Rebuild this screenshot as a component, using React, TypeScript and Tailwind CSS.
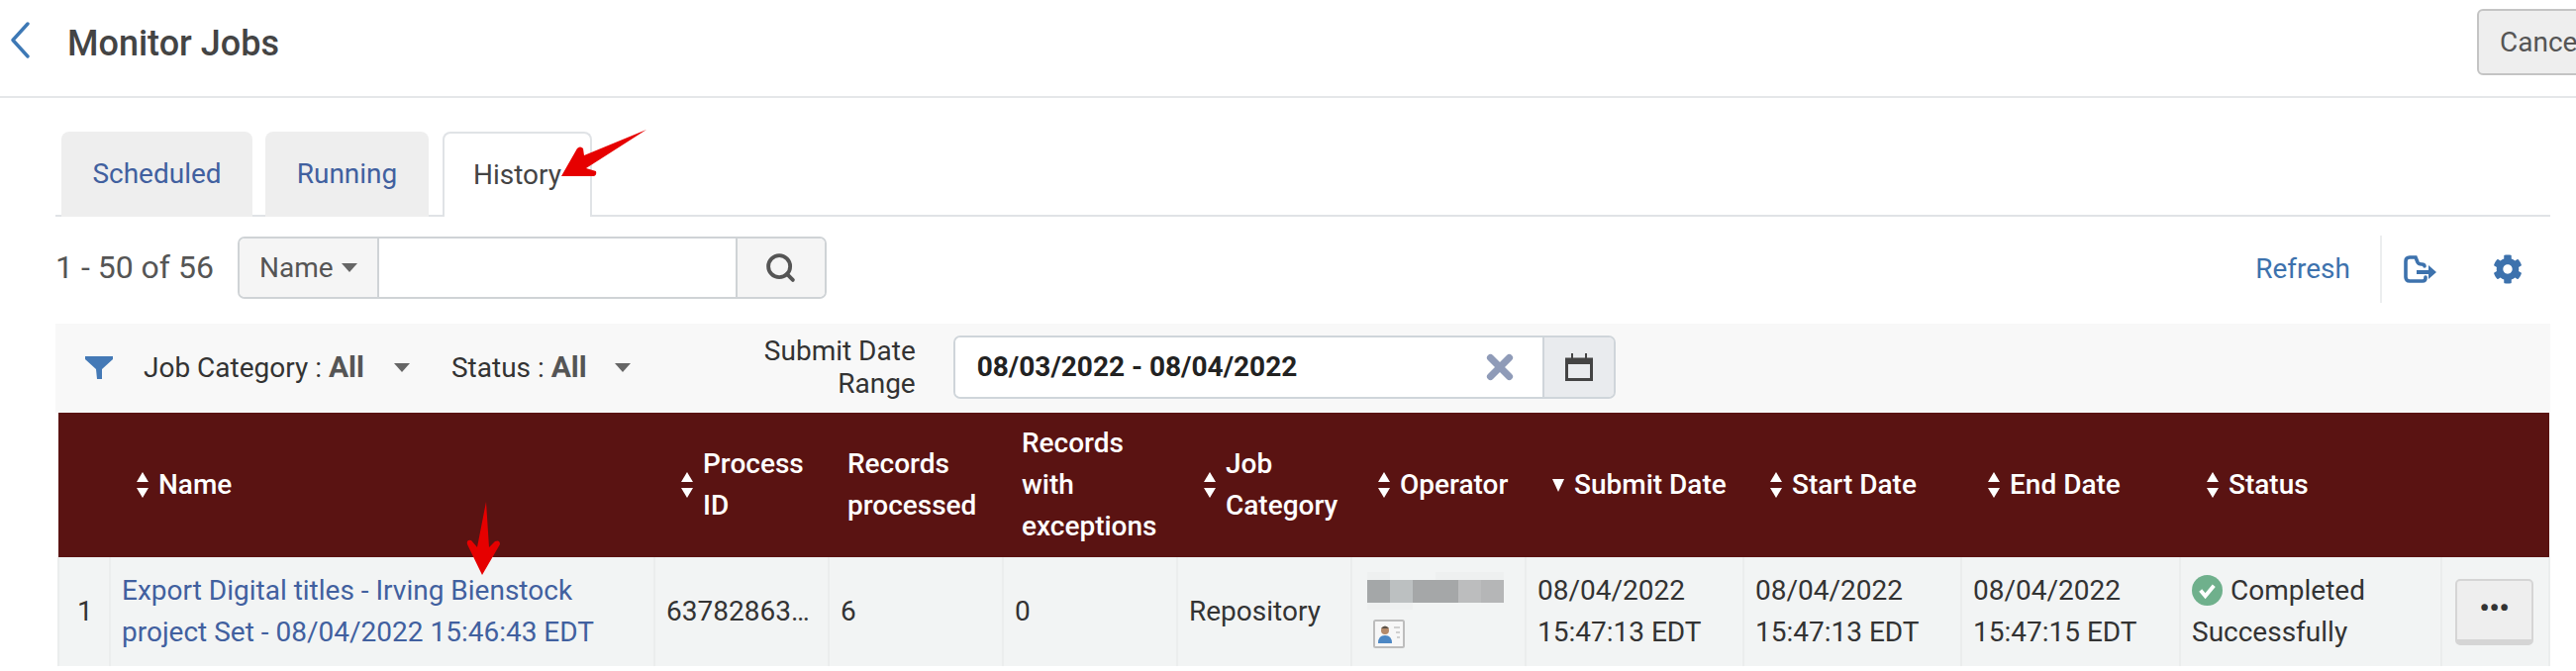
import React from 'react';
import { Search, X } from 'lucide-react';
import { FaCog } from 'react-icons/fa';

const font = "font-['Roboto',sans-serif]";

function SortIcon({ down }: { down?: boolean }) {
  if (down) {
    return (
      <svg width="14" height="14" viewBox="0 0 14 14" className="shrink-0 fill-white">
        <path d="M1 1 L13 1 L7 14 Z" />
      </svg>
    );
  }
  return (
    <svg width="14" height="28" viewBox="0 0 14 28" className="shrink-0 fill-white">
      <path d="M7 1 L13 11 L1 11 Z" />
      <path d="M1 17 L13 17 L7 27 Z" />
    </svg>
  );
}

function HeaderCell({ children, sort = true, down, pl = "pl-[26px]" }: { children: React.ReactNode; sort?: boolean; down?: boolean; pl?: string }) {
  return (
    <th className={`${pl} pr-1 font-medium text-left align-middle`}>
      <div className="flex items-center gap-[9px] leading-[42px]">
        {(sort || down) && <SortIcon down={down} />}
        <span>{children}</span>
      </div>
    </th>
  );
}

function Caret() {
  return <span className="inline-block w-0 h-0 border-x-[8px] border-x-transparent border-t-[9px] border-t-[#666]" />;
}

export default function App() {
  return (
    <div className={`${font} relative w-[2602px] h-[678px] overflow-hidden bg-white text-[28px] text-[#333]`}>
      {/* top bar */}
      <div className="h-[99px] border-b-2 border-[#e5e7e9] flex items-center">
        <svg width="20" height="37" viewBox="0 0 20 37" className="ml-[10px] -mt-[16px] fill-none stroke-[#3d78b5]">
          <path d="M18 2 L3 18.5 L18 35" strokeWidth="3.4" strokeLinecap="round" strokeLinejoin="round" />
        </svg>
        <h1 className="ml-[38px] text-[36px] font-medium text-[#444] -mt-[10px]">Monitor Jobs</h1>
        <button className="ml-auto -mr-[60px] -mt-[12px] w-[160px] h-[67px] text-left pl-[21px] bg-[#eeeeee] border-2 border-[#c4c4c4] rounded-[6px] text-[#555]">Cancel</button>
      </div>

      <div className="pl-[56px] w-[2576px]">
        {/* tabs */}
        <div className="mt-[33px] h-[87px] border-b-2 border-[#e0e3e6] flex items-end">
          <div className="ml-[6px] w-[193px] h-[86px] -mb-[2px] bg-[#eeeeee] rounded-t-[8px] flex items-center justify-center text-[#41609f]">Scheduled</div>
          <div className="ml-[13px] w-[165px] h-[86px] -mb-[2px] bg-[#eeeeee] rounded-t-[8px] flex items-center justify-center text-[#41609f]">Running</div>
          <div className="ml-[14px] w-[151px] h-[86px] -mb-[2px] bg-white border-2 border-b-0 border-[#e0e3e6] rounded-t-[8px] flex items-center justify-center text-[#444]">History</div>
        </div>

        {/* toolbar */}
        <div className="h-[108px] flex items-start">
          <span className="mt-[30px] text-[#555] text-[32px] leading-[42px]">1 - 50 of 56</span>
          <div className="ml-[24px] mt-[20px] w-[595px] h-[63px] flex border-2 border-[#cfd3d6] rounded-[7px] overflow-hidden">
            <div className="w-[141px] bg-[#f5f5f5] border-r-2 border-[#cfd3d6] flex items-center justify-center gap-[8px] text-[#555]">Name <Caret /></div>
            <div className="flex-1 bg-white" />
            <div className="w-[90px] bg-[#f5f5f5] border-l-2 border-[#cfd3d6] flex items-center justify-center">
              <Search size={33} strokeWidth={2.8} className="text-[#555]" />
            </div>
          </div>
          <div className="ml-auto mt-[19px] flex items-center h-[68px]">
            <span className="text-[#3d72ad] mr-[30px]">Refresh</span>
            <div className="w-[2px] h-[68px] bg-[#eceeef]" />
            <svg width="33" height="28" viewBox="0 0 33 28" className="ml-[22px] fill-none stroke-[#3d72ad]">
              <path d="M22 22 V23 Q22 26 19 26 H6 Q2 26 2 22 V6 Q2 2 6 2 H12 L14 7 Q15 9 18 9 Q21 9 21 11" strokeWidth="3.6" strokeLinecap="round" />
              <path d="M13 15 H25 V10 L33 17 L25 24 V19 H13 Z" className="fill-[#3d72ad]" strokeWidth="0" />
            </svg>
            <FaCog size={30} className="ml-[57px] mr-[28px] text-[#3d72ad]" />
          </div>
        </div>

        {/* filter bar */}
        <div className="h-[90px] bg-[#f8f8f8] flex items-center">
          <svg width="28" height="24" viewBox="0 0 28 24" className="ml-[30px] fill-[#4479b6] -mt-[2px]">
            <path d="M0 1 H28 V4 L17 14 V24 H12 L11 14 L0 4 Z" />
          </svg>
          <span className="ml-[31px] -mt-[3px]">Job Category : <b className="font-bold text-[30px] text-[#555]">All</b></span>
          <span className="ml-[30px] flex -mt-[2px]"><Caret /></span>
          <span className="ml-[42px] -mt-[3px]">Status : <b className="font-bold text-[30px] text-[#555]">All</b></span>
          <span className="ml-[28px] flex -mt-[2px]"><Caret /></span>
          <span className="ml-[130px] w-[158px] text-right leading-[33px] -mt-[3px]">Submit Date Range</span>
          <div className="ml-[38px] w-[669px] h-[64px] -mt-[3px] flex border-2 border-[#cfd5da] rounded-[7px] overflow-hidden">
            <div className="flex-1 bg-white flex items-center pl-[22px] font-bold text-[#222]">
              08/03/2022 - 08/04/2022
              <X size={38} strokeWidth={4.5} className="ml-auto mr-[24px] text-[#8f9bb8]" />
            </div>
            <div className="w-[72px] bg-[#e9ebee] border-l-2 border-[#cfd5da] flex items-center justify-center">
              <svg width="28" height="28" viewBox="0 0 28 28" className="fill-none stroke-[#444]">
                <path d="M1.5 6 H26.5 V26.5 H1.5 Z M1.5 8 H26.5" strokeWidth="3" />
                <path d="M1.5 5 H26.5 V11 H1.5 Z" className="fill-[#444]" strokeWidth="0" />
                <path d="M7 0 V5 M21 0 V5" strokeWidth="2" />
              </svg>
            </div>
          </div>
        </div>

        {/* table */}
        <table className="ml-[2px] w-[2516px] table-fixed border-collapse">
          <colgroup>
            <col className="w-[52px]" />
            <col className="w-[550px]" />
            <col className="w-[176px]" />
            <col className="w-[176px]" />
            <col className="w-[176px]" />
            <col className="w-[176px]" />
            <col className="w-[176px]" />
            <col className="w-[220px]" />
            <col className="w-[220px]" />
            <col className="w-[221px]" />
            <col className="w-[264px]" />
            <col className="w-[109px]" />
          </colgroup>
          <thead>
            <tr className="h-[146px] bg-[#5a1312] text-white">
              <th />
              <HeaderCell>Name</HeaderCell>
              <HeaderCell>Process ID</HeaderCell>
              <HeaderCell sort={false} pl="pl-[19px]">Records processed</HeaderCell>
              <HeaderCell sort={false} pl="pl-[19px]">Records with exceptions</HeaderCell>
              <HeaderCell>Job Category</HeaderCell>
              <HeaderCell>Operator</HeaderCell>
              <HeaderCell down sort={false}>Submit Date</HeaderCell>
              <HeaderCell>Start Date</HeaderCell>
              <HeaderCell>End Date</HeaderCell>
              <HeaderCell>Status</HeaderCell>
              <th />
            </tr>
          </thead>
          <tbody>
            <tr className="h-[110px] bg-[#f2f4f4] leading-[42px] [&>td]:border-x-2 [&>td]:border-[#ebeded] [&>td]:px-[11px]">
              <td className="pl-[18px]!">1</td>
              <td className="text-[#41609f]">Export Digital titles - Irving Bienstock project Set - 08/04/2022 15:46:43 EDT</td>
              <td className="whitespace-nowrap">63782863…</td>
              <td>6</td>
              <td>0</td>
              <td>Repository</td>
              <td className="align-top pt-[15px]">
                <div className="flex w-[138px] h-[8px] ml-[4px]">
                  <div className="w-[23px] bg-[#eef0f0]" />
                  <div className="w-[46px]" />
                  <div className="w-[69px] bg-[#eef0f0]" />
                </div>
                <div className="flex w-[138px] h-[23px] ml-[4px]">
                  <div className="w-[23px] bg-[#a4a7a8]" />
                  <div className="w-[23px] bg-[#bcc0c1]" />
                  <div className="w-[46px] bg-[#a5a7a8]" />
                  <div className="w-[23px] bg-[#bcbdbe]" />
                  <div className="w-[23px] bg-[#b5b6b7]" />
                </div>
                <div className="h-[7px] w-[46px] ml-[4px] bg-[#eef0f0]" />
                <svg width="32" height="29" viewBox="0 0 32 29" className="mt-[10px] ml-[10px]">
                  <rect x="1" y="1" width="30" height="27" rx="1.5" fill="#f7f7f7" stroke="#bdbdbd" strokeWidth="2" />
                  <path d="M21 8 H27 M23 13 H27 M24 18 H27" stroke="#c4c4c4" strokeWidth="1.6" />
                  <circle cx="12" cy="11" r="4" fill="#b48a6a" />
                  <path d="M8 9 Q12 4 16 9 Z" fill="#5b5148" />
                  <path d="M5 24 Q5 16 12 16 Q19 16 19 24 Z" fill="#4c87c4" />
                </svg>
              </td>
              <td>08/04/2022 15:47:13 EDT</td>
              <td>08/04/2022 15:47:13 EDT</td>
              <td>08/04/2022 15:47:15 EDT</td>
              <td>
                <svg width="31" height="31" viewBox="0 0 32 32" className="inline-block align-[-6px] mr-[8px]">
                  <circle cx="16" cy="16" r="16" fill="#6fb08c" />
                  <path d="M9 16 L14 22 L23 11" fill="none" stroke="#fff" strokeWidth="4" />
                </svg>
                Completed Successfully
              </td>
              <td>
                <div className="ml-[2px] w-[79px] h-[67px] bg-[#eeeeee] border-2 border-b-[6px] border-[#d5d5d5] rounded-[5px] flex items-center justify-center font-bold text-[#333] leading-none pb-[2px]">•••</div>
              </td>
            </tr>
          </tbody>
        </table>
      </div>

      {/* annotation arrows */}
      <svg width="120" height="70" viewBox="0 0 120 70" className="absolute left-[550px] top-[120px] fill-[#e60000]">
        <path d="M103 11 L42 50 L52 53 Q53 57 50 58 L17 58 L33 30 Q36 27 39 30 L40 37 Z" />
      </svg>
      <svg width="80" height="90" viewBox="0 0 80 90" className="absolute left-[450px] top-[500px] fill-[#e60000]">
        <path d="M41 7 L44 53 L50 47 Q55 45 55 50 L37 81 L22 50 Q21 45 26 46 L32 53 Z" />
      </svg>
    </div>
  );
}
